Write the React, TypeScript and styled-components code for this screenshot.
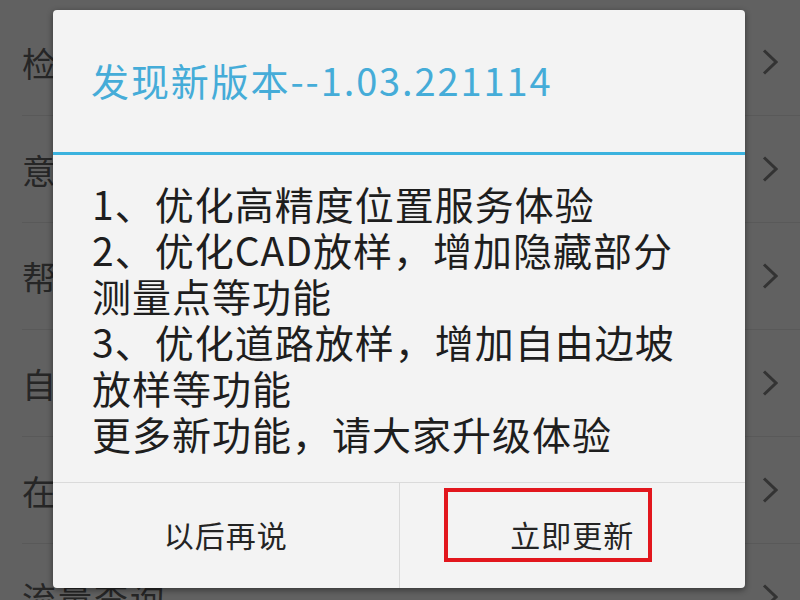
import React from 'react'
import styled, { createGlobalStyle } from 'styled-components'

const GlobalStyle = createGlobalStyle`
  html, body {
    margin: 0;
    padding: 0;
    background: #616161;
  }
  body {
    font-family: "Noto Sans CJK SC", "Noto Sans", sans-serif;
  }
`

const Screen = styled.div`
  position: relative;
  width: 800px;
  height: 600px;
  overflow: hidden;
  background: #616161;
`

const List = styled.div`
  display: flex;
  flex-direction: column;
  padding-top: 9px;
`

const Row = styled.div`
  display: flex;
  align-items: center;
  justify-content: space-between;
  height: 107px;
  margin-left: 22px;
  padding-right: 22px;
  box-sizing: border-box;
  border-bottom: 1px solid #595959;
  flex-shrink: 0;
`

const RowLabel = styled.span`
  font-size: 34px;
  color: #262626;
  letter-spacing: 2px;
`

const Chevron = () => (
  <svg width="16" height="26" viewBox="0 0 16 26">
    <polyline points="2,1.5 14,13 2,24.5" fill="none" stroke="#333" strokeWidth="3" />
  </svg>
)

const Dialog = styled.div`
  position: absolute;
  left: 53px;
  top: 10px;
  width: 692px;
  height: 578px;
  background: #f3f3f3;
  border-radius: 4px;
  box-shadow: 0 2px 6px rgba(0, 0, 0, 0.45);
  display: flex;
  flex-direction: column;
`

const Header = styled.div`
  height: 142px;
  display: flex;
  align-items: center;
  padding: 0 0 4px 38px;
  box-sizing: border-box;
  flex-shrink: 0;
`

const Title = styled.h1`
  margin: 0;
  font-weight: 400;
  font-size: 38px;
  color: #45acd8;
  letter-spacing: 1.9px;
`

const Rule = styled.div`
  height: 3px;
  background: #3bb2de;
  flex-shrink: 0;
`

const Body = styled.div`
  flex: 1;
  padding: 25px 0 0 39px;
  font-size: 39px;
  line-height: 46px;
  color: #1e1e1e;
  letter-spacing: 1px;
`

const Line = styled.div`
  white-space: nowrap;
`

const Footer = styled.div`
  display: flex;
  height: 105px;
  border-top: 1px solid #dadada;
  flex-shrink: 0;
`

const Action = styled.button<{ $divider?: boolean }>`
  position: relative;
  flex: 1;
  display: flex;
  align-items: center;
  justify-content: center;
  padding: 0 0 4px;
  border: 0;
  border-left: ${({ $divider }) => ($divider ? '1px solid #dadada' : '0')};
  background: transparent;
  font-family: inherit;
  font-size: 30px;
  color: #242424;
  letter-spacing: 1px;
`

const Highlight = styled.span`
  position: absolute;
  left: 44px;
  top: 5px;
  width: 208px;
  height: 74px;
  box-sizing: border-box;
  border: 4px solid #e2161d;
`

const rows = ['检查更新', '意见反馈', '帮助中心', '自动更新', '在线客服', '流量查询']

const notes = [
  '1、优化高精度位置服务体验',
  '2、优化CAD放样，增加隐藏部分',
  '测量点等功能',
  '3、优化道路放样，增加自由边坡',
  '放样等功能',
  '更多新功能，请大家升级体验',
]

export default function App() {
  return (
    <>
      <GlobalStyle />
      <Screen>
        <List>
          {rows.map((r) => (
            <Row key={r}>
              <RowLabel>{r}</RowLabel>
              <Chevron />
            </Row>
          ))}
        </List>
        <Dialog>
          <Header>
            <Title>发现新版本--1.03.221114</Title>
          </Header>
          <Rule />
          <Body>
            {notes.map((n) => (
              <Line key={n}>{n}</Line>
            ))}
          </Body>
          <Footer>
            <Action>以后再说</Action>
            <Action $divider>
              <Highlight />
              立即更新
            </Action>
          </Footer>
        </Dialog>
      </Screen>
    </>
  )
}
